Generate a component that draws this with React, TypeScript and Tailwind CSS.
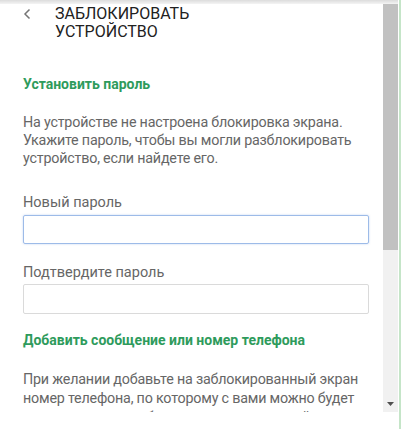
import React from 'react';

const font = {fontFamily: 'Roboto, "Noto Sans", sans-serif'};

const Scrollbar = () => (
  <div className="flex w-[15px] shrink-0 flex-col bg-[#f1f1f1]">
    <div className="h-[246px] w-full bg-[#c1c1c1]" />
    <div className="flex-1" />
    <div className="flex h-[17px] items-center justify-center">
      <svg width="7" height="4" viewBox="0 0 7 4">
        <path d="M0 0h7L3.5 4z" fill="#505050" />
      </svg>
    </div>
  </div>
);

export default function App() {
  return (
    <div className="flex h-[429px] w-[401px] overflow-hidden bg-white" style={font}>
      <div className="flex w-[398px] shrink-0 flex-col">
        <div className="h-[4px] bg-gradient-to-b from-[#dcdcdc] to-[#f4f4f4]" />
        <div className="flex h-[408px]">
          <div className="flex-1 overflow-hidden">
            <div className="flex items-start pt-[1px]">
              <div className="flex w-[55px] justify-center pl-[1px] pr-[3px] pt-[3px]">
                <svg width="8" height="12" viewBox="0 0 8 12">
                  <path d="M6.5 1.5L2 6l4.5 4.5" fill="none" stroke="#757575" strokeWidth="1.5" />
                </svg>
              </div>
              <div className="text-[16px] leading-[18px] text-[#212121]">
                ЗАБЛОКИРОВАТЬ
                <br />
                УСТРОЙСТВО
              </div>
            </div>
            <div className="px-[23px]">
              <div className="mt-[33.5px] text-[14px] font-bold leading-[18px] text-[#2e9b5c]">
                Установить пароль
              </div>
              <p className="mt-[20px] text-[14.3px] leading-[18.3px] tracking-[-0.2px] text-[#666]">
                На устройстве не настроена блокировка экрана.
                <br />
                Укажите пароль, чтобы вы могли разблокировать
                <br />
                устройство, если найдете его.
              </p>
              <div className="mt-[26.5px] text-[14.5px] leading-[18px] text-[#666]">Новый пароль</div>
              <div className="mt-[3px] h-[29px] w-[346px] rounded-[2px] border border-[#9dbbe8] shadow-[0_0_2px_rgba(120,160,230,0.5)]" />
              <div className="mt-[20px] text-[14.5px] leading-[18px] text-[#666]">Подтвердите пароль</div>
              <div className="mt-[2px] h-[30px] w-[346px] rounded-[2px] border border-[#dadada]" />
              <div className="mt-[17px] text-[14px] font-bold leading-[18px] text-[#2e9b5c]">
                Добавить сообщение или номер телефона
              </div>
              <p className="mt-[21px] text-[14.3px] leading-[19px] tracking-[-0.2px] text-[#666]">
                При желании добавьте на заблокированный экран
                <br />
                номер телефона, по которому с вами можно будет
                <br />
                связаться, или сообщение для того, кто найдет
                <br />
                устройство.
              </p>
            </div>
          </div>
          <Scrollbar />
        </div>
      </div>
      <div className="flex w-[3px] justify-end bg-white">
        <div className="w-[2px] bg-[#c5e5c8]" />
      </div>
    </div>
  );
}
